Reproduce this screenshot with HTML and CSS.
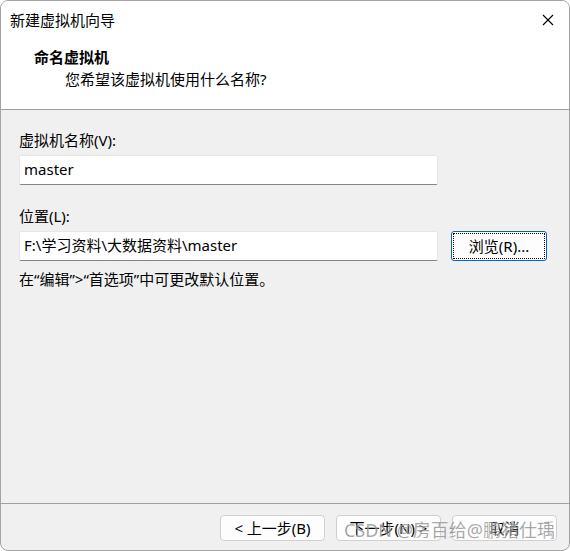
FILE: index.html
```html
<!DOCTYPE html>
<html lang="zh-CN">
<head>
<meta charset="utf-8">
<title>新建虚拟机向导</title>
<link rel="stylesheet" href="styles.css">
</head>
<body>
<div class="window">
  <div class="titlebar">
    <span class="title">新建虚拟机向导</span>
    <svg class="close" width="12" height="12" viewBox="0 0 12 12"><path d="M1 1L11 11M11 1L1 11" stroke="#000" stroke-width="1.1" fill="none"/></svg>
  </div>
  <div class="header">
    <div class="heading">命名虚拟机</div>
    <div class="subheading">您希望该虚拟机使用什么名称?</div>
  </div>
  <div class="content">
    <div class="label">虚拟机名称(V):</div>
    <div class="row">
      <div class="input">master</div>
    </div>
    <div class="label label-gap">位置(L):</div>
    <div class="row">
      <div class="input">F:\学习资料\大数据资料\master</div>
      <div class="btn btn-focus"><span class="focus-ring">浏览(R)...</span></div>
    </div>
    <div class="hint">在<span class="q">“</span>编辑<span class="q">”</span>&gt;<span class="q">“</span>首选项<span class="q">”</span>中可更改默认位置。</div>
  </div>
  <div class="footer">
    <div class="btn">&lt; 上一步(B)</div>
    <div class="btn">下一步(N) &gt;</div>
    <div class="btn">取消</div>
    <div class="watermark">CSDN @房百给@鹏猪仕瑀</div>
  </div>
</div>
</body>
</html>
```
FILE: styles.css
```css
html, body {
  margin: 0;
  padding: 0;
  background: #ffffff;
}
body {
  font-family: "Noto Sans", "Noto Sans CJK SC", sans-serif;
  font-size: 15px;
  color: #000;
}
.window {
  width: 570px;
  height: 551px;
  box-sizing: border-box;
  border: 1px solid #a3a3a3;
  border-radius: 8px;
  overflow: hidden;
  display: flex;
  flex-direction: column;
  background: #f0f0f0;
  position: relative;
}
.titlebar {
  height: 38px;
  background: #fff;
  display: flex;
  align-items: center;
  justify-content: space-between;
  padding: 0 15px 0 9px;
  flex: none;
}
.title {
  line-height: 38px;
}
.close {
  display: block;
}
.header {
  background: #fff;
  border-bottom: 1px solid #a0a0a0;
  padding-top: 8px;
  flex: none;
  height: 62px;
}
.heading {
  font-weight: bold;
  line-height: 20px;
  padding-left: 33px;
}
.subheading {
  line-height: 20px;
  margin-top: 2px;
  padding-left: 64px;
}
.content {
  flex: 1;
  padding: 20px 0 0 18px;
}
.label {
  line-height: 20px;
  margin-bottom: 5px;
}
.label-gap {
  margin-top: 21px;
}
.row {
  display: flex;
  align-items: flex-start;
  gap: 13px;
}
.input {
  width: 419px;
  height: 30px;
  box-sizing: border-box;
  background: #fff;
  border: 1px solid #e6e6e6;
  border-bottom: 1px solid #858585;
  border-radius: 2px;
  padding: 0 4px;
  line-height: 26px;
  white-space: nowrap;
}
.hint {
  margin-top: 8px;
  line-height: 20px;
}
.q {
  font-family: "Noto Sans", sans-serif;
}
.btn {
  width: 105px;
  height: 26px;
  box-sizing: border-box;
  border: 1px solid #d0d0d0;
  border-radius: 4px;
  background: #fdfdfd;
  display: flex;
  align-items: center;
  justify-content: center;
  line-height: 20px;
  white-space: nowrap;
}
.btn-focus {
  width: 96px;
  height: 30px;
  border: 1px solid #0067c0;
  border-radius: 3px;
  padding: 1px;
}
.focus-ring {
  flex: 1;
  align-self: stretch;
  border: 1px dotted #000;
  display: flex;
  align-items: center;
  justify-content: center;
}
.footer {
  height: 47px;
  flex: none;
  border-top: 1px solid #a0a0a0;
  display: flex;
  justify-content: flex-end;
  align-items: flex-start;
  gap: 11px;
  padding: 11px 12px 0 0;
  box-sizing: border-box;
  position: relative;
}
.watermark {
  position: absolute;
  right: 14px;
  top: 14px;
  font-size: 18px;
  line-height: 24px;
  color: rgba(120, 120, 120, 0.8);
  -webkit-text-stroke: 0.4px rgba(255, 255, 255, 0.6);
  white-space: nowrap;
  pointer-events: none;
}
```
